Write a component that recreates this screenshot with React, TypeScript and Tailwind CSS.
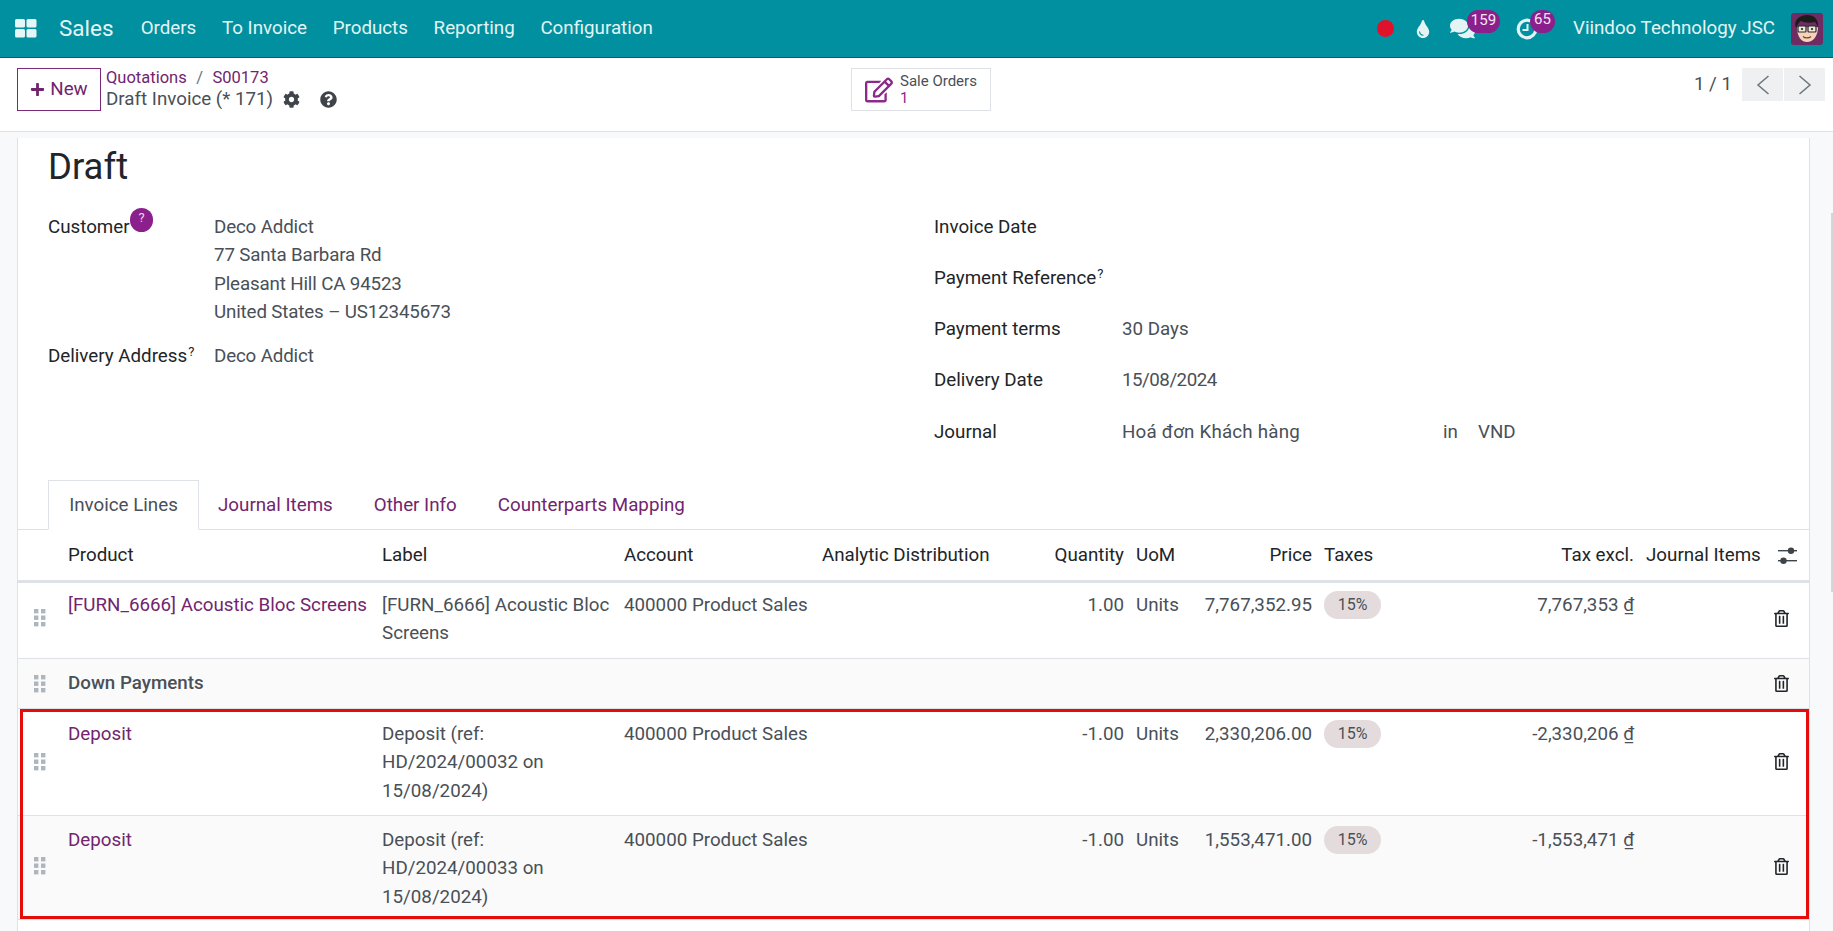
import React from "react";
import { FaPlus, FaCog, FaQuestionCircle, FaRegEdit, FaTint, FaComments, FaRegTrashAlt } from "react-icons/fa";

const rowGrid = "grid grid-cols-[44px_314px_242px_198px_189px_125px_63px_125px_159px_163px_126px_43px]";
const cell = "px-[6px] min-w-0";

function Apps() {
  return (
    <svg width="22" height="19" viewBox="0 0 22 19" fill="#e6f5f6">
      <rect x="0" y="0" width="10" height="8.5" rx="1.5" />
      <rect x="11.5" y="0" width="10" height="8.5" rx="1.5" />
      <rect x="0" y="10" width="10" height="8.5" rx="1.5" />
      <rect x="11.5" y="10" width="10" height="8.5" rx="1.5" />
    </svg>
  );
}

function Drag() {
  return (
    <svg width="12" height="18" viewBox="0 0 12 18" fill="#adb5bd">
      {[0, 6.5, 13].map((y) => (
        <React.Fragment key={y}>
          <rect x="0" y={y} width="4.4" height="4.4" />
          <rect x="7" y={y} width="4.4" height="4.4" />
        </React.Fragment>
      ))}
    </svg>
  );
}

function Sliders() {
  return (
    <svg width="20" height="17" viewBox="0 0 20 17" fill="#3f4449">
      <rect x="0" y="3" width="19" height="1.4" />
      <circle cx="13" cy="3.7" r="3.2" />
      <rect x="0" y="13" width="19" height="1.4" />
      <circle cx="5.5" cy="13.7" r="3.2" />
    </svg>
  );
}

function Clock() {
  return (
    <svg width="22" height="22" viewBox="0 0 22 22" fill="none" stroke="#e4f4f5">
      <circle cx="11" cy="11" r="8.8" strokeWidth="3.2" />
      <path d="M11.5 6v6H6.5" strokeWidth="2" />
    </svg>
  );
}

function Avatar() {
  return (
    <svg width="32" height="32" viewBox="0 0 32 32">
      <rect width="32" height="32" rx="3" fill="#6e2c62" />
      <path d="M6 14c0 9 4 15 10 15s11-6 11-15z" fill="#f4d3b8" />
      <path d="M5 15C2 7 9 2 16 2s12 4 11 13c-1-3-2-5-3-6-5 1-10 1-14-1-2 1-3 3-5 7z" fill="#1d1a1c" />
      <rect x="7" y="13" width="8" height="6" rx="1" fill="#efe6dc" stroke="#2a2a2a" strokeWidth="1.2" />
      <rect x="17" y="13" width="8" height="6" rx="1" fill="#efe6dc" stroke="#2a2a2a" strokeWidth="1.2" />
      <circle cx="11" cy="16" r="1.1" fill="#222" />
      <circle cx="21" cy="16" r="1.1" fill="#222" />
      <path d="M12 23.5c2 1.8 6 1.8 8 0" stroke="#7a3a2c" strokeWidth="1.2" fill="none" />
    </svg>
  );
}

function Chevron({ left }: { left?: boolean }) {
  return (
    <svg width="14" height="20" viewBox="0 0 14 20" fill="none" stroke="#6c757d" strokeWidth="1.5">
      <path d={left ? "M12.5 1L2 10l10.5 9" : "M1.5 1L12 10 1.5 19"} />
    </svg>
  );
}

function Badge({ children, className }: { children: React.ReactNode; className: string }) {
  return (
    <span className={"absolute flex h-[23px] items-center justify-center rounded-full bg-[#8b1f8c] pb-[3px] text-[15px] text-[#f3e6f3] " + className}>
      {children}
    </span>
  );
}

function NavBar() {
  return (
    <header className="flex h-[58px] shrink-0 items-center border-b border-[#04606b] bg-[#00909f] text-[#e4f4f5]">
      <span className="ml-[15px] flex"><Apps /></span>
      <span className="ml-[22px] text-[22.5px]">Sales</span>
      <nav className="ml-[27px] flex gap-[25.7px] text-[18.75px]">
        <span>Orders</span>
        <span>To Invoice</span>
        <span>Products</span>
        <span>Reporting</span>
        <span>Configuration</span>
      </nav>
      <div className="ml-auto flex items-center">
        <span className="h-[17px] w-[17px] rounded-full bg-[#e0112b]" />
        <FaTint className="ml-[20px] text-[18px]" />
        <span className="relative ml-[18px] flex">
          <FaComments className="text-[25px]" />
          <Badge className="left-[17px] top-[-6px] w-[33px]">159</Badge>
        </span>
        <span className="relative ml-[41px] flex">
          <Clock />
          <Badge className="left-[14px] top-[-8px] w-[25px]">65</Badge>
        </span>
        <span className="ml-[35px] text-[18.75px]">Viindoo Technology JSC</span>
        <span className="ml-[16px] mr-[10px] flex"><Avatar /></span>
      </div>
    </header>
  );
}

function ControlPanel() {
  return (
    <div className="relative flex h-[74px] shrink-0 border-b border-[#dee2e6] bg-white pt-[10px]">
      <button className="ml-[17px] flex h-[43px] w-[84px] items-center justify-center gap-[5px] border border-[#7a2a78] text-[18.75px] text-[#71256e]">
        <FaPlus className="text-[15px]" />
        New
      </button>
      <div className="ml-[5px] flex flex-col">
        <div className="flex h-[20px] items-center text-[16.5px] text-[#71256e]">
          <span>Quotations</span>
          <span className="mx-[9.5px] text-[#6c757d]">/</span>
          <span>S00173</span>
        </div>
        <div className="flex h-[23px] items-center text-[18.75px] text-[#495057]">
          <span>Draft Invoice (* 171)</span>
          <FaCog className="ml-[10px] text-[17px] text-[#3f444a]" />
          <FaQuestionCircle className="ml-[20px] text-[17px] text-[#3f444a]" />
        </div>
      </div>
      <div className="absolute left-[851px] top-[10px] flex h-[43px] w-[140px] items-center border border-[#dee2e6] pl-[13px]">
        <FaRegEdit className="text-[28px] text-[#8b2a8a]" />
        <div className="ml-[7px] flex flex-col text-[15px] leading-[17px]">
          <span className="text-[#495057]">Sale Orders</span>
          <span className="text-[#8b2a8a]">1</span>
        </div>
      </div>
      <div className="ml-auto mr-[8px] flex h-[33px] items-center">
        <span className="mr-[10px] text-[18.75px] text-[#495057]">1 / 1</span>
        <span className="flex h-[33px] w-[41px] items-center justify-center bg-[#eef0f1]"><Chevron left /></span>
        <span className="ml-[1px] flex h-[33px] w-[41px] items-center justify-center bg-[#eef0f1]"><Chevron /></span>
      </div>
    </div>
  );
}

function Field({ label, sup, children, h }: { label: string; sup?: boolean; children?: React.ReactNode; h: string }) {
  return (
    <div className={"flex " + h}>
      <span className="w-[188px] text-[#212529]">
        {label}
        {sup && <sup className="ml-[1px] text-[13px]">?</sup>}
      </span>
      {children}
    </div>
  );
}

function Header() {
  return (
    <div className="pl-[30px]">
      <h1 className="h-[75px] text-[36.5px] leading-[58px] text-[#212529]">Draft</h1>
      <div className="flex h-[268px] text-[18.75px] leading-[28.3px] text-[#495057]">
        <div className="w-[886px]">
          <div className="flex">
            <span className="relative w-[166px] text-[#212529]">
              Customer
              <span className="absolute left-[82px] top-[-5px] flex h-[24px] w-[23px] items-center justify-center rounded-full bg-[#8b1f8c] pb-[3px] text-[13px] text-[#e9d4e9]">?</span>
            </span>
            <div className="tracking-[-0.15px]">
              <div>Deco Addict</div>
              <div>77 Santa Barbara Rd</div>
              <div>Pleasant Hill CA 94523</div>
              <div>United States – US12345673</div>
            </div>
          </div>
          <div className="mt-[16px] flex">
            <span className="w-[166px] whitespace-nowrap text-[#212529]">Delivery Address<sup className="ml-[1px] text-[13px]">?</sup></span>
            <span className="tracking-[-0.15px]">Deco Addict</span>
          </div>
        </div>
        <div className="flex-1">
          <Field label="Invoice Date" h="h-[51px]" />
          <Field label="Payment Reference" sup h="h-[51px]" />
          <Field label="Payment terms" h="h-[51px]"><span>30 Days</span></Field>
          <Field label="Delivery Date" h="h-[52px]"><span className="tracking-[-0.5px]">15/08/2024</span></Field>
          <Field label="Journal" h="h-[51px]">
            <span className="w-[321px] tracking-[0.2px]">Hoá đơn Khách hàng</span>
            <span className="w-[35px]">in</span>
            <span>VND</span>
          </Field>
        </div>
      </div>
    </div>
  );
}

function Tabs() {
  return (
    <div className="flex h-[49px] items-end border-b border-[#dee2e6] pl-[30px] text-[18.75px] text-[#71256e]">
      <span className="mb-[-1px] flex h-[50px] w-[151px] items-center justify-center border border-b-white border-[#dee2e6] bg-white pt-[1px] text-[#495057]">Invoice Lines</span>
      <span className="flex h-[49px] items-center pl-[19px] pt-[2px]">Journal Items</span>
      <span className="flex h-[49px] items-center pl-[41px] pt-[2px]">Other Info</span>
      <span className="flex h-[49px] items-center pl-[41px] pt-[2px]">Counterparts Mapping</span>
    </div>
  );
}

function Handle({ top }: { top: string }) {
  return <div className={"flex justify-center pl-[6px] pr-[6px] " + top}><Drag /></div>;
}

function Trash({ top }: { top: string }) {
  return <div className={"flex justify-center pr-[12px] text-[#212529] " + top}><FaRegTrashAlt className="text-[17px]" /></div>;
}

function Tax() {
  return (
    <div className={cell}>
      <span className="flex h-[28px] w-[57px] items-center justify-center rounded-full bg-[#e4dcdc] text-[16px]">15%</span>
    </div>
  );
}

type Line = { product: string; label: string[]; qty: string; price: string; excl: string; h: string; pt: string; bg: string; handleTop: string; trashTop: string };

function Row({ l }: { l: Line }) {
  return (
    <div className={rowGrid + " border-b border-[#dee2e6] " + l.h + " " + l.pt + " " + l.bg}>
      <Handle top={l.handleTop} />
      <div className={cell + " whitespace-nowrap text-[#71256e]"}>{l.product}</div>
      <div className={cell + " whitespace-nowrap"}>{l.label.map((t) => <div key={t}>{t}</div>)}</div>
      <div className={cell + " whitespace-nowrap"}>400000 Product Sales</div>
      <div className={cell} />
      <div className={cell + " text-right"}>{l.qty}</div>
      <div className={cell}>Units</div>
      <div className={cell + " text-right whitespace-nowrap"}>{l.price}</div>
      <Tax />
      <div className={cell + " text-right"}>{l.excl} <span>₫</span></div>
      <div className={cell} />
      <Trash top={l.trashTop} />
    </div>
  );
}

function Table() {
  return (
    <div className="text-[18.75px] leading-[28.3px] text-[#495057]">
      <div className={rowGrid + " h-[53px] items-center border-b-[3px] border-[#dee2e6] text-[#212529]"}>
        <div />
        <div className={cell}>Product</div>
        <div className={cell}>Label</div>
        <div className={cell}>Account</div>
        <div className={cell + " whitespace-nowrap"}>Analytic Distribution</div>
        <div className={cell + " text-right"}>Quantity</div>
        <div className={cell}>UoM</div>
        <div className={cell + " text-right"}>Price</div>
        <div className={cell}>Taxes</div>
        <div className={cell + " text-right"}>Tax excl.</div>
        <div className={cell + " whitespace-nowrap"}>Journal Items</div>
        <div className="flex justify-start pl-[12px] pt-[1px]"><Sliders /></div>
      </div>
      <Row l={{ product: "[FURN_6666] Acoustic Bloc Screens", label: ["[FURN_6666] Acoustic Bloc", "Screens"], qty: "1.00", price: "7,767,352.95", excl: "7,767,353", h: "h-[76px]", pt: "pt-[8px]", bg: "bg-white", handleTop: "pt-[18px]", trashTop: "pt-[19px]" }} />
      <div className={rowGrid + " h-[50px] items-center border-b border-[#dee2e6] bg-[#fafafa]"}>
        <Handle top="" />
        <div className={cell + " col-span-10 font-medium"}>Down Payments</div>
        <Trash top="" />
      </div>
      <div className="relative">
        <Row l={{ product: "Deposit", label: ["Deposit (ref:", "HD/2024/00032 on", "15/08/2024)"], qty: "-1.00", price: "2,330,206.00", excl: "-2,330,206", h: "h-[107px]", pt: "pt-[11px]", bg: "bg-white", handleTop: "pt-[33px]", trashTop: "pt-[33px]" }} />
        <Row l={{ product: "Deposit", label: ["Deposit (ref:", "HD/2024/00033 on", "15/08/2024)"], qty: "-1.00", price: "1,553,471.00", excl: "-1,553,471", h: "h-[104px]", pt: "pt-[10px]", bg: "bg-[#fafafa]", handleTop: "pt-[31px]", trashTop: "pt-[32px]" }} />
        <div className="absolute bottom-[1px] left-[2px] right-0 top-0 border-[3px] border-[#e60c0c]" />
      </div>
    </div>
  );
}

export default function App() {
  return (
    <div className="relative flex h-[931px] w-[1833px] flex-col overflow-hidden bg-[#f8f9fa] font-['Roboto',sans-serif]">
      <NavBar />
      <ControlPanel />
      <main className="ml-[17px] mr-[23px] mt-[6px] flex-1 border-x border-[#dee2e6] bg-white">
        <Header />
        <Tabs />
        <Table />
      </main>
      <div className="absolute right-0 top-[213px] h-[379px] w-[2px] bg-[#d4d6d8]" />
    </div>
  );
}
